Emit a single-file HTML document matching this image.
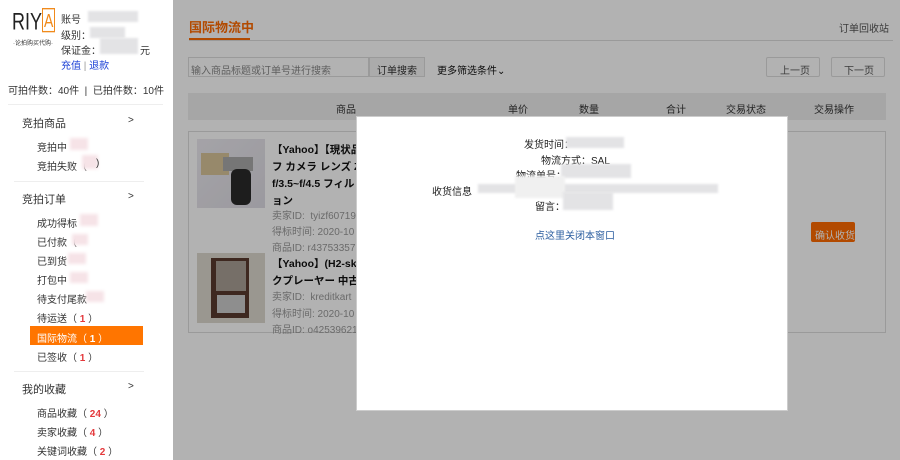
<!DOCTYPE html>
<html><head><meta charset="utf-8"><style>
*{margin:0;padding:0;box-sizing:border-box}
body{width:900px;height:460px;overflow:hidden;position:relative;background:#fff;font-family:"Liberation Sans","Noto Sans CJK SC",sans-serif;font-size:10px;color:#333}
.a{position:absolute;white-space:nowrap}
.blur{position:absolute;background:#e3e3e5;filter:blur(1px)}
.pk{position:absolute;background:#f6e3e7;filter:blur(1.5px)}
.red{color:#e4393c;font-weight:bold}
.sep{position:absolute;height:1px;background:#eee}
.ov{position:absolute;left:173px;top:0;width:727px;height:460px;background:rgba(0,0,0,0.3)}
</style></head><body>
<!-- sidebar -->
<div class="a" style="left:12px;top:8px;font-size:18px;color:#222;transform:scaleY(1.35);transform-origin:top left;font-family:'Liberation Sans',sans-serif">RIY<span style="border:1.5px solid #f08a1c;color:#f08a1c;padding:0 1px;font-size:14px;vertical-align:2px">A</span></div>
<div class="a" style="left:13px;top:38px;font-size:6px;color:#333">·论拍购买代购·</div>
<div class="a" style="left:61px;top:11px">账号</div><div class="blur" style="left:88px;top:11px;width:50px;height:11px"></div>
<div class="a" style="left:61px;top:27px">级别：</div><div class="blur" style="left:90px;top:27px;width:35px;height:11px"></div>
<div class="a" style="left:61px;top:42px">保证金：</div><div class="blur" style="left:100px;top:38px;width:38px;height:16px"></div><div class="a" style="left:140px;top:42px">元</div>
<div class="a" style="left:61px;top:57px;color:#1a3fd6">充值 <span style="color:#999">|</span> 退款</div>
<div class="a" style="left:8px;top:82px">可拍件数：40件 &nbsp;| &nbsp;已拍件数：10件</div>
<div class="sep" style="left:8px;top:104px;width:155px"></div>
<div class="a" style="left:22px;top:115px;font-size:11px">竞拍商品</div><div class="a" style="left:128px;top:115px">&gt;</div>
<div class="a" style="left:37px;top:139px">竞拍中</div><div class="pk" style="left:70px;top:138px;width:18px;height:12px"></div>
<div class="a" style="left:37px;top:158px">竞拍失败（</div><div class="pk" style="left:82px;top:155px;width:16px;height:14px"></div><div class="a" style="left:96px;top:158px">)</div>
<div class="sep" style="left:14px;top:181px;width:130px"></div>
<div class="a" style="left:22px;top:191px;font-size:11px">竞拍订单</div><div class="a" style="left:128px;top:191px">&gt;</div>
<div class="a" style="left:37px;top:215px">成功得标</div><div class="pk" style="left:80px;top:214px;width:18px;height:12px"></div>
<div class="a" style="left:37px;top:234px">已付款（</div><div class="pk" style="left:72px;top:234px;width:16px;height:11px"></div>
<div class="a" style="left:37px;top:253px">已到货</div><div class="pk" style="left:68px;top:253px;width:18px;height:11px"></div>
<div class="a" style="left:37px;top:272px">打包中</div><div class="pk" style="left:70px;top:272px;width:18px;height:11px"></div>
<div class="a" style="left:37px;top:291px">待支付尾款</div><div class="pk" style="left:86px;top:291px;width:18px;height:11px"></div>
<div class="a" style="left:37px;top:310px">待运送（ <span class="red">1</span> ）</div>
<div style="position:absolute;left:30px;top:326px;width:113px;height:19px;background:#ff7500"></div>
<div class="a" style="left:37px;top:330px;color:#fff">国际物流（ <b>1</b> ）</div>
<div class="a" style="left:37px;top:349px">已签收（ <span class="red">1</span> ）</div>
<div class="sep" style="left:14px;top:371px;width:130px"></div>
<div class="a" style="left:22px;top:381px;font-size:11px">我的收藏</div><div class="a" style="left:128px;top:381px">&gt;</div>
<div class="a" style="left:37px;top:405px">商品收藏（ <span class="red">24</span> ）</div>
<div class="a" style="left:37px;top:424px">卖家收藏（ <span class="red">4</span> ）</div>
<div class="a" style="left:37px;top:443px">关键词收藏（ <span class="red">2</span> ）</div>
<!-- main -->
<div class="a" style="left:189px;top:17px;font-size:13px;font-weight:bold;color:#ff6a00">国际物流中</div>
<div style="position:absolute;left:189px;top:38px;width:61px;height:2px;background:#ff6a00"></div>
<div style="position:absolute;left:189px;top:40px;width:704px;height:1px;background:#ddd"></div>
<div class="a" style="left:839px;top:20px;color:#555">订单回收站</div>
<div style="position:absolute;left:188px;top:57px;width:181px;height:20px;border:1px solid #ddd"></div>
<div class="a" style="left:191px;top:62px;color:#888">输入商品标题或订单号进行搜索</div>
<div style="position:absolute;left:369px;top:57px;width:56px;height:20px;border:1px solid #ddd;background:#f5f5f5"></div>
<div class="a" style="left:377px;top:62px">订单搜索</div>
<div class="a" style="left:437px;top:62px;color:#111">更多筛选条件⌄</div>
<div style="position:absolute;left:766px;top:57px;width:54px;height:20px;border:1px solid #ddd;border-radius:2px"></div><div class="a" style="left:780px;top:62px;color:#555">上一页</div>
<div style="position:absolute;left:831px;top:57px;width:54px;height:20px;border:1px solid #ddd;border-radius:2px"></div><div class="a" style="left:844px;top:62px;color:#555">下一页</div>
<div style="position:absolute;left:188px;top:93px;width:698px;height:27px;background:#eee"></div>
<div class="a" style="left:336px;top:101px">商品</div><div class="a" style="left:508px;top:101px">单价</div><div class="a" style="left:579px;top:101px">数量</div><div class="a" style="left:666px;top:101px">合计</div><div class="a" style="left:726px;top:101px">交易状态</div><div class="a" style="left:814px;top:101px">交易操作</div>
<div style="position:absolute;left:188px;top:131px;width:698px;height:202px;border:1px solid #ddd"></div>
<div style="position:absolute;left:197px;top:139px;width:68px;height:69px;background:linear-gradient(135deg,#eceaf0,#dedce4)"><div style="position:absolute;left:4px;top:14px;width:28px;height:22px;background:#d9c49a"></div><div style="position:absolute;left:26px;top:18px;width:30px;height:14px;background:#aaa"></div><div style="position:absolute;left:34px;top:30px;width:20px;height:36px;background:#2a2a2a;border-radius:6px"></div></div>
<div style="position:absolute;left:197px;top:253px;width:68px;height:70px;background:#ddd8cf"><div style="position:absolute;left:14px;top:5px;width:38px;height:60px;background:#5a3a2e"></div><div style="position:absolute;left:19px;top:8px;width:30px;height:30px;background:#a9a096"></div><div style="position:absolute;left:20px;top:42px;width:28px;height:18px;background:#ccc"></div></div>
<div class="a" style="left:272px;top:142px;font-size:10.5px;font-weight:bold;color:#111;line-height:17px">【Yahoo】【現状品<br>フ カメラ レンズ Zo<br>f/3.5~f/4.5 フィル<br>ョン</div>
<div class="a" style="left:272px;top:209px;color:#999;line-height:16px">卖家ID:&nbsp; tyizf60719<br>得标时间:&nbsp;2020-10<br>商品ID:&nbsp;r43753357</div>
<div class="a" style="left:272px;top:256px;font-size:10.5px;font-weight:bold;color:#111;line-height:17px">【Yahoo】(H2-sk4<br>クプレーヤー 中古品</div>
<div class="a" style="left:272px;top:290px;color:#999;line-height:16.5px">卖家ID:&nbsp; kreditkart<br>得标时间:&nbsp;2020-10<br>商品ID:&nbsp;o42539621</div>
<div style="position:absolute;left:811px;top:222px;width:44px;height:20px;background:#ff6a00;border-radius:2px"></div>
<div class="a" style="left:815px;top:227px;color:#fff">确认收货</div>
<div class="ov"></div>
<!-- modal -->
<div style="position:absolute;left:356px;top:116px;width:432px;height:295px;background:#fff;border:1px solid #ccc"></div>
<div class="a" style="left:524px;top:136px;color:#222">发货时间：</div><div class="blur" style="left:566px;top:137px;width:58px;height:11px"></div>
<div class="a" style="left:541px;top:152px;color:#222">物流方式：SAL</div>
<div class="a" style="left:516px;top:167px;color:#222">物流单号：</div><div class="blur" style="left:561px;top:164px;width:70px;height:14px"></div>
<div class="a" style="left:432px;top:183px;color:#222">收货信息</div><div class="blur" style="left:478px;top:184px;width:240px;height:9px"></div><div class="blur" style="left:515px;top:176px;width:50px;height:22px;background:#f0f0f0"></div>
<div class="a" style="left:535px;top:198px;color:#222">留言：</div><div class="blur" style="left:563px;top:192px;width:50px;height:18px"></div>
<div class="a" style="left:535px;top:227px;color:#2a5d9f">点这里关闭本窗口</div>
</body></html>
